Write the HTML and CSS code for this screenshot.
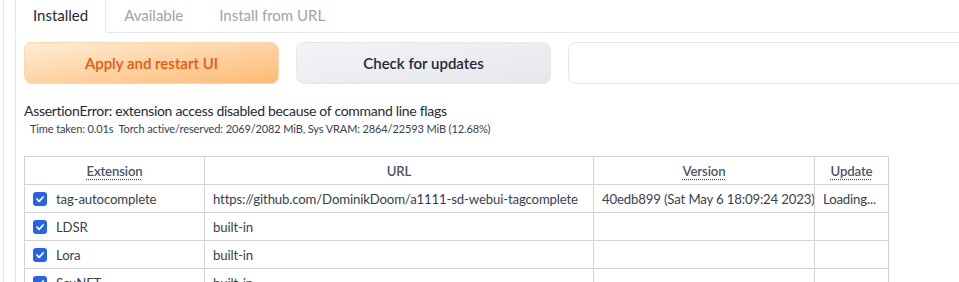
FILE: index.html
```html
<!DOCTYPE html>
<html>
<head>
<meta charset="utf-8">
<link rel="stylesheet" href="styles.css">
</head>
<body>
<div class="outer">
  <div class="tabs">
    <div class="tab-bar">
      <button class="tab selected">Installed</button>
      <button class="tab">Available</button>
      <button class="tab">Install from URL</button>
      <div class="tab-fill"></div>
    </div>
    <div class="panel">
      <div class="actions">
        <button class="btn primary">Apply and restart UI</button>
        <button class="btn secondary">Check for updates</button>
        <div class="textbox"></div>
      </div>
      <div class="message">AssertionError: extension access disabled because of command line flags</div>
      <div class="timing">Time taken: 0.01s&nbsp; Torch active/reserved: 2069/2082 MiB, Sys VRAM: 2864/22593 MiB (12.68%)</div>
      <table class="ext-table">
        <colgroup>
          <col class="c-ext">
          <col class="c-url">
          <col class="c-ver">
          <col class="c-upd">
        </colgroup>
        <thead>
          <tr>
            <th><abbr>Extension</abbr></th>
            <th>URL</th>
            <th><abbr>Version</abbr></th>
            <th><abbr>Update</abbr></th>
          </tr>
        </thead>
        <tbody>
          <tr>
            <td><label class="ext"><span class="cb"><svg viewBox="0 0 14 14" width="14" height="14"><path d="M4 7.2l2.1 2.1L10.2 5" fill="none" stroke="#fff" stroke-width="1.8" stroke-linecap="round" stroke-linejoin="round"/></svg></span>tag-autocomplete</label></td>
            <td>https://github.com/DominikDoom/a1111-sd-webui-tagcomplete</td>
            <td>40edb899 (Sat May 6 18:09:24 2023)</td>
            <td>Loading...</td>
          </tr>
          <tr>
            <td><label class="ext"><span class="cb"><svg viewBox="0 0 14 14" width="14" height="14"><path d="M4 7.2l2.1 2.1L10.2 5" fill="none" stroke="#fff" stroke-width="1.8" stroke-linecap="round" stroke-linejoin="round"/></svg></span>LDSR</label></td>
            <td>built-in</td>
            <td></td>
            <td></td>
          </tr>
          <tr>
            <td><label class="ext"><span class="cb"><svg viewBox="0 0 14 14" width="14" height="14"><path d="M4 7.2l2.1 2.1L10.2 5" fill="none" stroke="#fff" stroke-width="1.8" stroke-linecap="round" stroke-linejoin="round"/></svg></span>Lora</label></td>
            <td>built-in</td>
            <td></td>
            <td></td>
          </tr>
          <tr>
            <td><label class="ext"><span class="cb"><svg viewBox="0 0 14 14" width="14" height="14"><path d="M4 7.2l2.1 2.1L10.2 5" fill="none" stroke="#fff" stroke-width="1.8" stroke-linecap="round" stroke-linejoin="round"/></svg></span>ScuNET</label></td>
            <td>built-in</td>
            <td></td>
            <td></td>
          </tr>
        </tbody>
      </table>
    </div>
  </div>
</div>
</body>
</html>
```

FILE: styles.css
```css
html, body {
  margin: 0;
  padding: 0;
  background: #ffffff;
  overflow: hidden;
}
body {
  font-family: "Lato", "Noto Sans", sans-serif;
  color: #374151;
  width: 959px;
  height: 282px;
}
.outer {
  margin-left: 3px;
  border-left: 1px solid #e5e7eb;
  padding-left: 11px;
  height: 320px;
  width: 1100px;
}
.tabs {
  margin-top: -8px;
}
.tab-bar {
  display: flex;
  height: 41px;
}
.tab {
  font-family: inherit;
  background: transparent;
  border: 1px solid transparent;
  border-bottom: 1px solid #e5e7eb;
  font-size: 15px;
  color: #9ca3af;
  padding: 4px 17px 0 17px;
  margin: 0;
  cursor: pointer;
}
.tab.selected {
  color: #1f2937;
  border-color: #e5e7eb;
  border-bottom-color: transparent;
  background: #fff;
  border-radius: 6px 6px 0 0;
}
.tab-fill {
  flex: 1;
  border-bottom: 1px solid #e5e7eb;
}
.panel {
  border-left: 1px solid #e5e7eb;
  padding: 9px 0 0 8px;
}
.actions {
  display: flex;
  gap: 17px;
  height: 42px;
}
.btn {
  font-family: inherit;
  width: 255px;
  height: 42px;
  border-radius: 8px;
  font-size: 15px;
  font-weight: 600;
  cursor: pointer;
}
.btn.primary {
  background: linear-gradient(to bottom right, #ffedd5, #fdba74);
  border: 1px solid #fed7aa;
  color: #ea580c;
}
.btn.secondary {
  background: linear-gradient(to bottom right, #f3f4f6, #e5e7eb);
  border: 1px solid #e5e7eb;
  color: #1f2937;
}
.textbox {
  flex: 1;
  border: 1px solid #e5e7eb;
  border-radius: 8px;
  background: #fff;
}
.message {
  margin-top: 17px;
  font-size: 14px;
  letter-spacing: -0.3px;
  line-height: 20px;
  color: #1f2937;
}
.timing {
  padding-left: 6px;
  font-size: 11px;
  letter-spacing: -0.12px;
  line-height: 16px;
  color: #374151;
}
.ext-table {
  margin-top: 19px;
  border-collapse: collapse;
  table-layout: fixed;
  width: 865px;
  font-size: 13.2px;
  letter-spacing: -0.15px;
  color: #374151;
}
.ext-table th, .ext-table td {
  border: 1px solid #d4d4d4;
  height: 27px;
  padding: 0 8px;
  text-align: left;
  white-space: nowrap;
  overflow: hidden;
}
.ext-table th {
  text-align: center;
  font-weight: 600;
  color: #4b5563;
}
.c-ext { width: 180px; }
.c-url { width: 389px; }
.c-ver { width: 221px; }
.c-upd { width: 74px; }
abbr {
  text-decoration: underline dotted;
  text-underline-offset: 3px;
}
.ext {
  display: flex;
  align-items: center;
  gap: 9px;
}
.cb {
  flex: none;
  width: 14px;
  height: 14px;
  border-radius: 3px;
  background: #2563eb;
  display: inline-flex;
}
```
